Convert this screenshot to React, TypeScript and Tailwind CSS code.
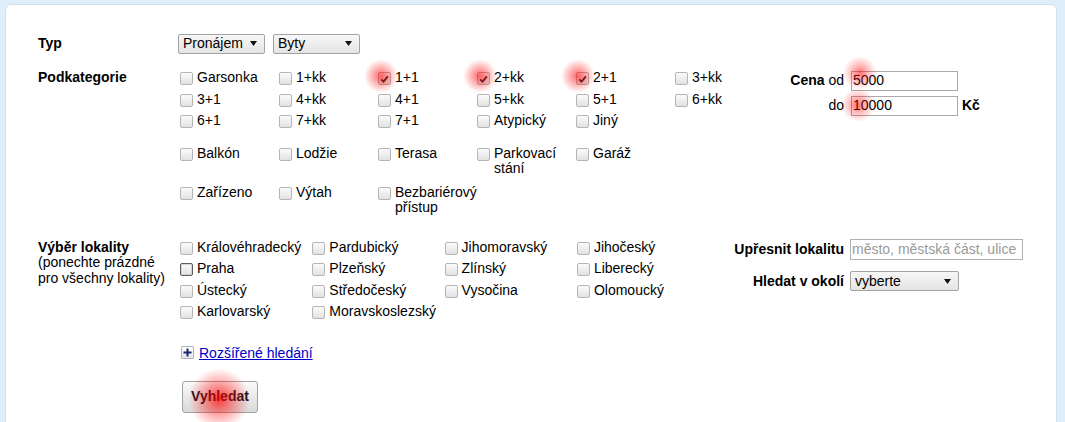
import type { ReactNode } from "react";
import clsx from "clsx";

type Opt = { label: ReactNode; checked?: boolean; hover?: boolean };

const podkategorie: Opt[][] = [
  [
    { label: "Garsonka" },
    { label: "1+kk" },
    { label: "1+1", checked: true },
    { label: "2+kk", checked: true },
    { label: "2+1", checked: true },
    { label: "3+kk" },
  ],
  [{ label: "3+1" }, { label: "4+kk" }, { label: "4+1" }, { label: "5+kk" }, { label: "5+1" }, { label: "6+kk" }],
  [{ label: "6+1" }, { label: "7+kk" }, { label: "7+1" }, { label: "Atypický" }, { label: "Jiný" }],
];

const vybaveni: Opt[][] = [
  [
    { label: "Balkón" },
    { label: "Lodžie" },
    { label: "Terasa" },
    { label: (<>Parkovací<br />stání</>) },
    { label: "Garáž" },
  ],
  [{ label: "Zařízeno" }, { label: "Výtah" }, { label: (<>Bezbariérový<br />přístup</>) }],
];

const kraje: Opt[] = [
  { label: "Královéhradecký" },
  { label: "Pardubický" },
  { label: "Jihomoravský" },
  { label: "Jihočeský" },
  { label: "Praha", hover: true },
  { label: "Plzeňský" },
  { label: "Zlínský" },
  { label: "Liberecký" },
  { label: "Ústecký" },
  { label: "Středočeský" },
  { label: "Vysočina" },
  { label: "Olomoucký" },
  { label: "Karlovarský" },
  { label: "Moravskoslezský" },
];

function Box({ checked, hover }: { checked?: boolean; hover?: boolean }) {
  return (
    <span
      className={clsx(
        "mt-[2px] ml-[2px] mr-[4px] flex h-[13px] w-[13px] shrink-0 items-center justify-center rounded-[2px] border bg-linear-to-b from-[#fbfbfb] to-[#e2e2e2]",
        hover ? "border-[#5c5c5c] shadow-[inset_0_0_0_1px_#d4d4d4]" : "border-[#b5b5b5]"
      )}
    >
      {checked && (
        <svg width="9" height="8" viewBox="0 0 9 8">
          <path d="M1.2 4.3 L3.5 6.6 L7.9 1.3" stroke="#2a2a2a" strokeWidth="1.9" fill="none" />
        </svg>
      )}
    </span>
  );
}

function Item({ opt }: { opt: Opt }) {
  return (
    <label className="flex items-start py-[3px] leading-[15.5px]">
      <Box checked={opt.checked} hover={opt.hover} />
      <span>{opt.label}</span>
    </label>
  );
}

function Arrow() {
  return (
    <svg width="7" height="5" viewBox="0 0 7 5" className="shrink-0">
      <path d="M0 0 H7 L3.5 5 Z" fill="#111" />
    </svg>
  );
}

function FakeSelect({ value, className }: { value: string; className: string }) {
  return (
    <div
      className={clsx(
        "flex items-center justify-between rounded-[2px] border border-[#a3a3a3] bg-linear-to-b from-[#f7f7f7] to-[#e4e4e4] pl-[4px] pr-[7px]",
        className
      )}
    >
      <span>{value}</span>
      <Arrow />
    </div>
  );
}

export default function App() {
  return (
    <div className="relative h-[422px] overflow-hidden bg-[#dfeef9] pl-[5px] pr-[8px] pt-[4px] font-['Liberation_Sans',Arial,sans-serif] text-[14px] text-black">
      <div className="h-[440px] rounded-t-[6px] border border-[#cde3f4] bg-white pl-[32px] pt-[28px]">
        {/* Typ */}
        <div className="flex items-center">
          <div className="w-[140px] font-bold">Typ</div>
          <div className="flex gap-[8px]">
            <FakeSelect value="Pronájem" className="h-[20px] w-[87px]" />
            <FakeSelect value="Byty" className="h-[20px] w-[87px]" />
          </div>
        </div>

        {/* Podkategorie */}
        <div className="mt-[13px] flex">
          <div className="w-[140px] py-[3px] font-bold leading-[15.5px]">Podkategorie</div>
          <div className="w-[594px]">
            {podkategorie.map((row, i) => (
              <div key={i} className="grid grid-cols-[repeat(6,99px)]">
                {row.map((o, j) => (
                  <Item key={j} opt={o} />
                ))}
              </div>
            ))}
            <div className="mt-[11px]">
              {vybaveni.map((row, i) => (
                <div key={i} className={clsx("grid grid-cols-[repeat(6,99px)]", i > 0 && "mt-[2px]")}>
                  {row.map((o, j) => (
                    <Item key={j} opt={o} />
                  ))}
                </div>
              ))}
            </div>
          </div>
          <div className="mt-[3px] flex flex-col gap-[4px]">
            <div className="flex items-center">
              <div className="w-[72px] text-right">
                <b>Cena</b> od
              </div>
              <input
                readOnly
                defaultValue="5000"
                className="ml-[7px] h-[20px] w-[107px] border border-[#a9a9a9] pl-[1px] outline-none"
              />
            </div>
            <div className="flex items-center">
              <div className="w-[72px] text-right">do</div>
              <input
                readOnly
                defaultValue="10000"
                className="ml-[7px] h-[20px] w-[107px] border border-[#a9a9a9] pl-[1px] outline-none"
              />
              <b className="ml-[4px]">Kč</b>
            </div>
          </div>
        </div>

        {/* Výběr lokality */}
        <div className="mt-[18px] flex">
          <div className="w-[140px] py-[3px] leading-[15.5px]">
            <b>Výběr lokality</b>
            <br />
            (ponechte prázdné
            <br />
            pro všechny lokality)
          </div>
          <div className="grid w-[529px] grid-cols-[repeat(4,132.3px)]">
            {kraje.map((o, i) => (
              <Item key={i} opt={o} />
            ))}
          </div>
          <div className="mt-[2px] flex flex-col gap-[11px]">
            <div className="flex items-center">
              <div className="w-[137px] text-right font-bold">Upřesnit lokalitu</div>
              <input
                readOnly
                placeholder="město, městská část, ulice"
                className="ml-[6px] h-[21px] w-[173px] border border-[#b0b0b0] pl-[1px] outline-none placeholder:text-[#9a9a9a]"
              />
            </div>
            <div className="flex items-center">
              <div className="w-[137px] text-right font-bold">Hledat v okolí</div>
              <FakeSelect value="vyberte" className="ml-[6px] h-[20px] w-[109px]" />
            </div>
          </div>
        </div>

        {/* Rozšířené hledání */}
        <div className="ml-[143px] mt-[22px] flex items-center leading-[16px]">
          <span className="mr-[5px] flex h-[13px] w-[13px] items-center justify-center rounded-[1px] border border-[#aab4c0] bg-linear-to-b from-white to-[#e6e6e6]">
            <svg width="9" height="9" viewBox="0 0 9 9">
              <path d="M4.5 0.5 V8.5 M0.5 4.5 H8.5" stroke="#1b2470" strokeWidth="2" />
            </svg>
          </span>
          <a href="#" className="text-[#0000cc] underline">
            Rozšířené hledání
          </a>
        </div>

        {/* Vyhledat */}
        <button
          type="button"
          className="ml-[144px] mt-[20px] flex h-[32px] w-[76px] items-center justify-center rounded-[3px] border border-[#a2a2a2] bg-linear-to-b from-[#fafafa] to-[#dadada] font-bold text-[#151520]"
        >
          Vyhledat
        </button>
      </div>

      {/* heatmap spots */}
      <div className="pointer-events-none absolute left-[364px] top-[59px] h-[34px] w-[34px] rounded-full bg-[radial-gradient(circle,rgba(255,0,0,0.6)_0%,rgba(255,0,0,0.3)_35%,rgba(255,0,0,0)_70%)]" />
      <div className="pointer-events-none absolute left-[463px] top-[59px] h-[34px] w-[34px] rounded-full bg-[radial-gradient(circle,rgba(255,0,0,0.6)_0%,rgba(255,0,0,0.3)_35%,rgba(255,0,0,0)_70%)]" />
      <div className="pointer-events-none absolute left-[561px] top-[59px] h-[34px] w-[34px] rounded-full bg-[radial-gradient(circle,rgba(255,0,0,0.6)_0%,rgba(255,0,0,0.3)_35%,rgba(255,0,0,0)_70%)]" />
      <div className="pointer-events-none absolute left-[843px] top-[56px] h-[34px] w-[34px] rounded-full bg-[radial-gradient(circle,rgba(255,0,0,0.55)_0%,rgba(255,0,0,0.25)_35%,rgba(255,0,0,0)_70%)]" />
      <div className="pointer-events-none absolute left-[841px] top-[88px] h-[34px] w-[34px] rounded-full bg-[radial-gradient(circle,rgba(255,0,0,0.55)_0%,rgba(255,0,0,0.25)_35%,rgba(255,0,0,0)_70%)]" />
      <div className="pointer-events-none absolute left-[188px] top-[368px] h-[62px] w-[62px] rounded-full bg-[radial-gradient(circle,rgba(255,0,0,0.75)_0%,rgba(255,0,0,0.4)_30%,rgba(255,0,0,0)_70%)]" />
    </div>
  );
}
